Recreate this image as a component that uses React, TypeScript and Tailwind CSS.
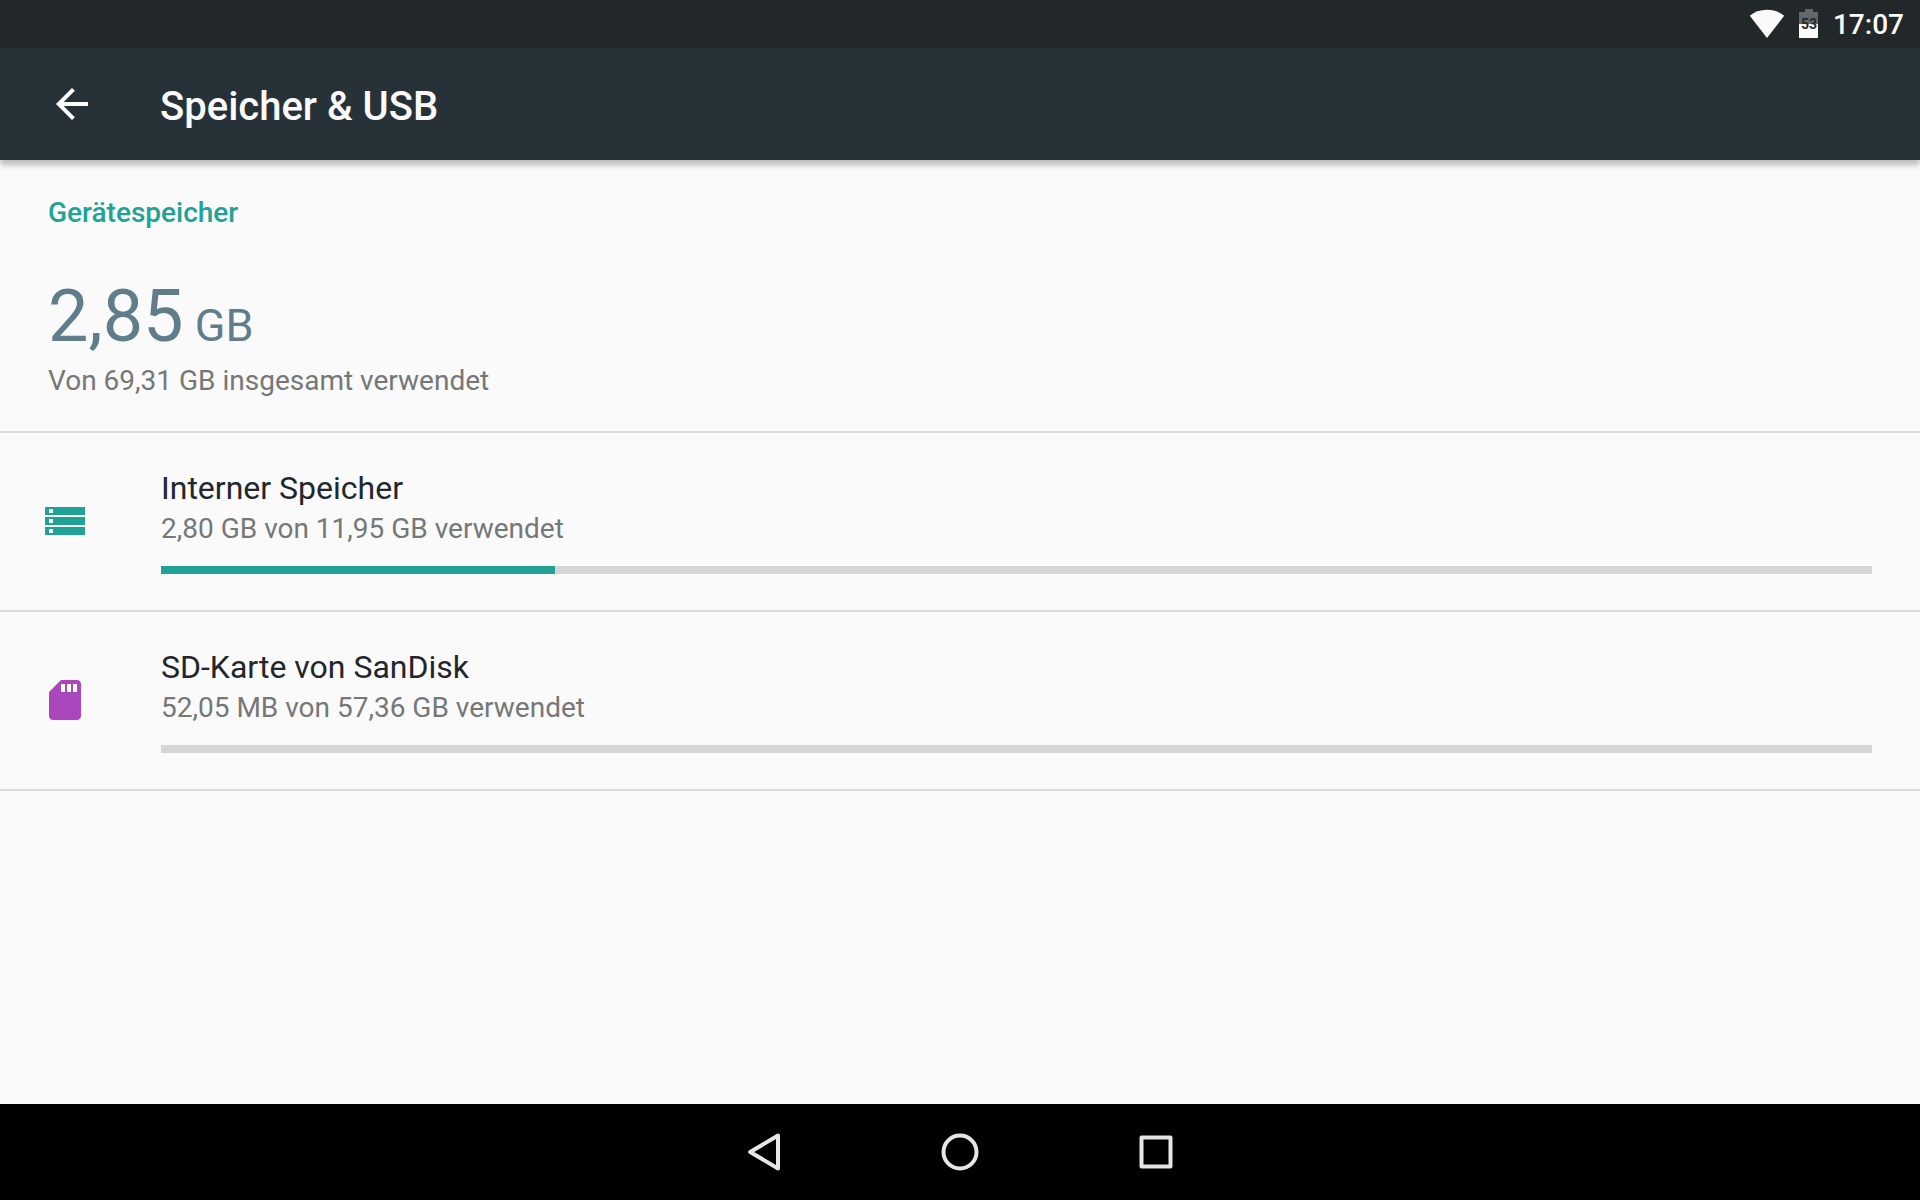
import type { ReactNode } from "react";

interface Volume {
  id: string;
  name: string;
  summary: string;
  percent: number;
  icon: ReactNode;
}

function StorageIcon() {
  return (
    <svg viewBox="0 0 48 48" className="size-12" aria-hidden="true">
      <path
        fill="#20a396"
        fillRule="evenodd"
        d="M4 10h40v8H4zM8 12v4h4v-4zM4 20h40v8H4zM8 22v4h4v-4zM4 30h40v8H4zM8 32v4h4v-4z"
      />
    </svg>
  );
}

function SdCardIcon() {
  return (
    <svg viewBox="0 0 24 24" className="size-12" aria-hidden="true">
      <path
        fill="#ab47bc"
        d="M18 2h-8L4.02 8 4 20c0 1.1.9 2 2 2h12c1.1 0 2-.9 2-2V4c0-1.1-.9-2-2-2z"
      />
      <path fill="#fff" d="M10 4h2v4h-2zM13 4h2v4h-2zM16 4h2v4h-2z" />
    </svg>
  );
}

const volumes: Volume[] = [
  {
    id: "internal",
    name: "Interner Speicher",
    summary: "2,80 GB von 11,95 GB verwendet",
    percent: 23,
    icon: <StorageIcon />,
  },
  {
    id: "sdcard",
    name: "SD-Karte von SanDisk",
    summary: "52,05 MB von 57,36 GB verwendet",
    percent: 0,
    icon: <SdCardIcon />,
  },
];

function StatusBar() {
  return (
    <div className="flex h-12 items-start justify-end bg-[#22272a] pr-4 text-[#fafafa]">
      <svg viewBox="0 0 36 48" className="mr-3.5 h-12 w-9" aria-label="WLAN">
        <path fill="currentColor" d="M18 38 .8 15.8C5.4 12 11.4 9.8 18 9.8s12.6 2.2 17.2 6z" />
      </svg>
      <div className="relative mr-3.5 h-12 w-5">
        <svg viewBox="0 0 20 48" className="h-12 w-5" aria-hidden="true">
          <path fill="#646769" d="M6 9h8v3h5v12H0V12h6z" />
          <path fill="currentColor" d="M0 24h19v14H0z" />
        </svg>
        <span className="absolute inset-x-0 top-4 text-center text-sm leading-4 font-bold text-[#22272a]">53</span>
      </div>
      <time className="text-[28px] leading-[50px] font-medium">17:07</time>
    </div>
  );
}

function VolumeRow({ volume }: { volume: Volume }) {
  return (
    <li className="border-b-2 border-[#dcdcdc]">
      <a href={`#${volume.id}`} className="flex items-center pt-[35px] pr-12 pb-9 pl-[41px]">
        {volume.icon}
        <div className="ml-[72px] flex-1">
          <h3 className="text-[32px] leading-10 text-[#21272b]">{volume.name}</h3>
          <p className="mt-px text-[28px] leading-10 text-[#757877]">{volume.summary}</p>
          <div
            role="progressbar"
            aria-label={volume.name}
            aria-valuenow={volume.percent}
            aria-valuemin={0}
            aria-valuemax={100}
            className="mt-[17px] h-2 bg-[#d6d6d6]"
          >
            <div className="h-full bg-[#20a396]" style={{ width: `${volume.percent}%` }} />
          </div>
        </div>
      </a>
    </li>
  );
}

function NavigationBar() {
  return (
    <nav className="flex h-24 items-center justify-center gap-[148px] bg-black text-[#e6e6e6]">
      <button type="button" aria-label="Zurück">
        <svg viewBox="0 0 48 48" className="size-12" fill="none" stroke="currentColor" strokeWidth="4" strokeLinejoin="round">
          <path d="M38 7.5v33L10.2 24z" />
        </svg>
      </button>
      <button type="button" aria-label="Startbildschirm">
        <svg viewBox="0 0 48 48" className="size-12" fill="none" stroke="currentColor" strokeWidth="4">
          <circle cx="24" cy="24" r="16.5" />
        </svg>
      </button>
      <button type="button" aria-label="Übersicht">
        <svg viewBox="0 0 48 48" className="size-12" fill="none" stroke="currentColor" strokeWidth="4" strokeLinejoin="round">
          <path d="M9.5 9.5h29v29h-29z" />
        </svg>
      </button>
    </nav>
  );
}

export default function App() {
  return (
    <div className="flex min-h-screen flex-col bg-[#fafafa] font-['Roboto',sans-serif]">
      <StatusBar />

      <header className="flex h-28 items-center bg-[#273238] pl-12 text-[#fafafa] shadow-[0_5px_6px_rgba(0,0,0,0.25)]">
        <button type="button" aria-label="Nach oben">
          <svg viewBox="0 0 24 24" className="size-12" fill="#fff">
            <path d="M20 11H7.83l5.59-5.59L12 4l-8 8 8 8 1.41-1.41L7.83 13H20v-2z" />
          </svg>
        </button>
        <h1 className="ml-16 pt-1.5 text-[40px] leading-12 font-medium">Speicher &amp; USB</h1>
      </header>

      <main className="flex-1">
        <section className="border-b-2 border-[#dcdcdc] px-12 pt-[33px] pb-[30px]">
          <h2 className="text-[28px] leading-10 font-medium text-[#20a396]">Gerätespeicher</h2>
          <p className="mt-11 text-[72px] leading-20 text-[#607d8b]">
            2,85<span className="text-[45px] leading-none"> GB</span>
          </p>
          <p className="mt-1 text-[28px] leading-10 text-[#757877]">Von 69,31 GB insgesamt verwendet</p>
        </section>

        <ul>
          {volumes.map((volume) => (
            <VolumeRow key={volume.id} volume={volume} />
          ))}
        </ul>
      </main>

      <NavigationBar />
    </div>
  );
}
